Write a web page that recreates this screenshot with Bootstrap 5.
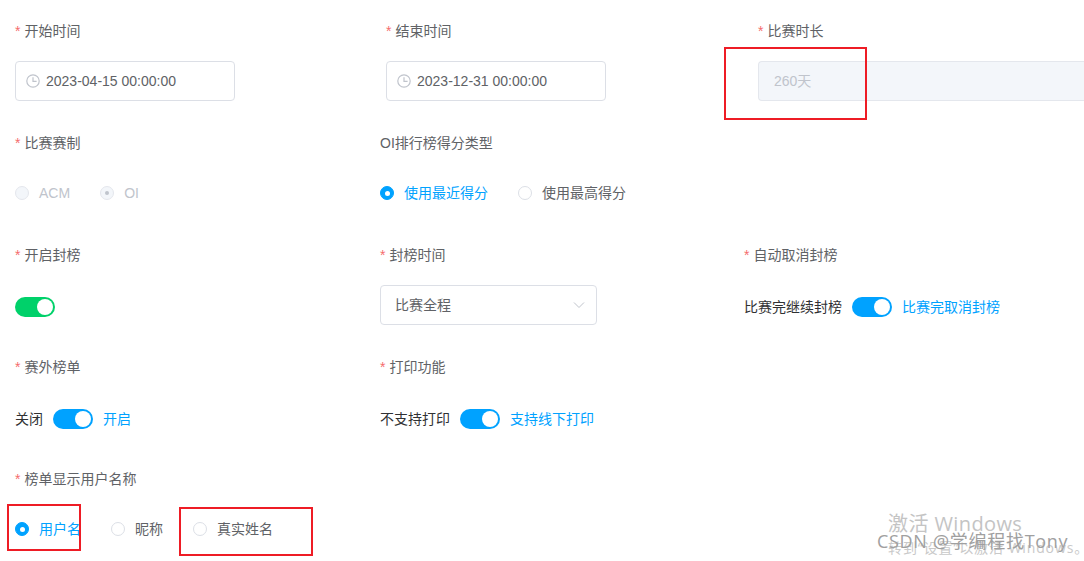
<!DOCTYPE html>
<html lang="zh-CN">
<head>
  <meta charset="UTF-8">
  <title>比赛设置</title>
  <link href="https://cdn.jsdelivr.net/npm/bootstrap@5.3.0/dist/css/bootstrap.min.css" rel="stylesheet">
  <style>
    html, body { height: 561px; overflow: hidden; }
    body { font-family: "Liberation Sans", "Noto Sans CJK SC", sans-serif; font-size: 14px; color: #606266; background: #fff; position: relative; }
    .form-line { height: 112px; padding: 21px 0 0 15px; }
    .cell-wide { width: 365px; flex: none; }
    .cell-mid { width: 364px; flex: none; }
    .cell-first { width: 371px; flex: none; }
    .cell-second { width: 372px; flex: none; }
    .cell-last { flex: 1 1 auto; min-width: 0; }
    .field-label { height: 20px; line-height: 20px; margin-bottom: 20px; white-space: nowrap; }
    .req { color: #f56c6c; margin-right: 4px; }
    .field-body { height: 40px; }
    .field-body.low { padding-top: 4px; }
    .time-box, .pick-box, .off-box { height: 40px; border: 1px solid #dcdfe6; border-radius: 4px; line-height: 38px; }
    .time-box { width: 220px; padding-left: 10px; gap: 6px; }
    .time-box svg { flex: none; }
    .pick-box { width: 217px; padding: 0 11px 0 14px; }
    .off-box { padding-left: 15px; background: #f3f6fa; border-color: #e4e7ed; border-right: 0; border-radius: 4px 0 0 4px; color: #c0c4cc; }
    .dot { width: 14px; height: 14px; border: 1px solid #dcdfe6; border-radius: 50%; background: #fff; flex: none; }
    .dot.on { background: #00a2ff; border-color: #00a2ff; }
    .dot.on::after { content: ""; width: 5px; height: 5px; background: #fff; border-radius: 50%; }
    .dot.off { background: #f3f6fa; border-color: #e4e7ed; }
    .dot.off-on::after { content: ""; width: 4px; height: 4px; background: #c0c4cc; border-radius: 50%; }
    .radio-item { gap: 10px; margin-right: 30px; white-space: nowrap; }
    .radio-item.active { color: #00a2ff; }
    .radio-item.muted-item { color: #c0c4cc; }
    .toggle { width: 40px; height: 20px; border-radius: 10px; background: #00a2ff; padding-right: 2px; flex: none; }
    .toggle.green { background: #00d16a; }
    .toggle::after { content: ""; width: 16px; height: 16px; background: #fff; border-radius: 50%; }
    .switch-line { gap: 10px; white-space: nowrap; color: #303133; }
    .text-on { color: #00a2ff; }
    .mark-box { position: absolute; border: 2px solid #ee1c25; }
    .box-a { left: 724px; top: 47px; width: 143px; height: 73px; }
    .box-b { left: 7px; top: 504px; width: 74px; height: 47px; }
    .box-c { left: 179px; top: 507px; width: 134px; height: 49px; }
    .wm { position: absolute; white-space: nowrap; font-family: "Open Sans", "Noto Sans CJK SC", sans-serif; }
    .wm-a { left: 888px; top: 511px; font-size: 20px; line-height: 26px; letter-spacing: .4px; color: #c4c4c4; }
    .wm-b { left: 888px; top: 539px; font-size: 14px; line-height: 18px; letter-spacing: .9px; color: #c9c9c9; }
    .wm-c { left: 877px; top: 530px; font-size: 18px; line-height: 22px; letter-spacing: .7px; color: #a0a0a0; }
  </style>
</head>
<body>
  <div class="form-line d-flex">
    <div class="cell-first">
      <div class="field-label"><span class="req">*</span>开始时间</div>
      <div class="time-box d-flex align-items-center">
        <svg width="14" height="14" viewBox="0 0 14 14" fill="none" stroke="#c0c4cc" stroke-width="1.2"><circle cx="7" cy="7" r="6.2"/><path d="M7 3.2V7.4H10.6"/></svg>
        <span>2023-04-15 00:00:00</span>
      </div>
    </div>
    <div class="cell-second">
      <div class="field-label"><span class="req">*</span>结束时间</div>
      <div class="time-box d-flex align-items-center">
        <svg width="14" height="14" viewBox="0 0 14 14" fill="none" stroke="#c0c4cc" stroke-width="1.2"><circle cx="7" cy="7" r="6.2"/><path d="M7 3.2V7.4H10.6"/></svg>
        <span>2023-12-31 00:00:00</span>
      </div>
    </div>
    <div class="cell-last">
      <div class="field-label"><span class="req">*</span>比赛时长</div>
      <div class="off-box">260天</div>
    </div>
  </div>

  <div class="form-line d-flex">
    <div class="cell-wide">
      <div class="field-label"><span class="req">*</span>比赛赛制</div>
      <div class="field-body d-flex align-items-center">
        <div class="radio-item muted-item d-flex align-items-center"><span class="dot off"></span>ACM</div>
        <div class="radio-item muted-item d-flex align-items-center"><span class="dot off off-on d-flex align-items-center justify-content-center"></span>OI</div>
      </div>
    </div>
    <div class="cell-wide">
      <div class="field-label">OI排行榜得分类型</div>
      <div class="field-body d-flex align-items-center">
        <div class="radio-item active d-flex align-items-center"><span class="dot on d-flex align-items-center justify-content-center"></span>使用最近得分</div>
        <div class="radio-item d-flex align-items-center"><span class="dot"></span>使用最高得分</div>
      </div>
    </div>
  </div>

  <div class="form-line d-flex">
    <div class="cell-wide">
      <div class="field-label"><span class="req">*</span>开启封榜</div>
      <div class="field-body low d-flex align-items-center">
        <span class="toggle green d-flex align-items-center justify-content-end"></span>
      </div>
    </div>
    <div class="cell-mid">
      <div class="field-label"><span class="req">*</span>封榜时间</div>
      <div class="pick-box d-flex align-items-center justify-content-between">
        <span>比赛全程</span>
        <svg width="12" height="8" viewBox="0 0 12 8" fill="none" stroke="#c0c4cc" stroke-width="1"><path d="M1 1.5L6 6.5L11 1.5"/></svg>
      </div>
    </div>
    <div class="cell-last">
      <div class="field-label"><span class="req">*</span>自动取消封榜</div>
      <div class="field-body low switch-line d-flex align-items-center">
        <span>比赛完继续封榜</span>
        <span class="toggle d-flex align-items-center justify-content-end"></span>
        <span class="text-on">比赛完取消封榜</span>
      </div>
    </div>
  </div>

  <div class="form-line d-flex">
    <div class="cell-wide">
      <div class="field-label"><span class="req">*</span>赛外榜单</div>
      <div class="field-body low switch-line d-flex align-items-center">
        <span>关闭</span>
        <span class="toggle d-flex align-items-center justify-content-end"></span>
        <span class="text-on">开启</span>
      </div>
    </div>
    <div class="cell-wide">
      <div class="field-label"><span class="req">*</span>打印功能</div>
      <div class="field-body low switch-line d-flex align-items-center">
        <span>不支持打印</span>
        <span class="toggle d-flex align-items-center justify-content-end"></span>
        <span class="text-on">支持线下打印</span>
      </div>
    </div>
  </div>

  <div class="form-line d-flex">
    <div class="cell-wide">
      <div class="field-label"><span class="req">*</span>榜单显示用户名称</div>
      <div class="field-body d-flex align-items-center">
        <div class="radio-item active d-flex align-items-center"><span class="dot on d-flex align-items-center justify-content-center"></span>用户名</div>
        <div class="radio-item d-flex align-items-center"><span class="dot"></span>昵称</div>
        <div class="radio-item d-flex align-items-center"><span class="dot"></span>真实姓名</div>
      </div>
    </div>
  </div>

  <div class="mark-box box-a"></div>
  <div class="mark-box box-b"></div>
  <div class="mark-box box-c"></div>

  <div class="wm wm-a">激活 Windows</div>
  <div class="wm wm-b">转到“设置”以激活 Windows。</div>
  <div class="wm wm-c">CSDN @学编程找Tony</div>

  <script src="https://cdn.jsdelivr.net/npm/bootstrap@5.3.0/dist/js/bootstrap.bundle.min.js"></script>
</body>
</html>
